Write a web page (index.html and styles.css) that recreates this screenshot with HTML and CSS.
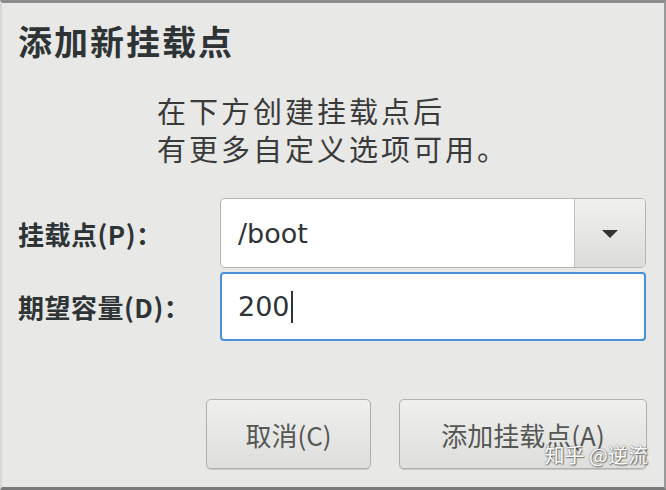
FILE: index.html
```html
<!DOCTYPE html>
<html lang="zh">
<head>
<meta charset="utf-8">
<link rel="stylesheet" href="styles.css">
</head>
<body>
<div class="dialog">
  <div class="title">添加新挂载点</div>
  <div class="desc">在下方创建挂载点后<br>有更多自定义选项可用。</div>
  <div class="form">
    <div class="label">挂载点(P)：</div>
    <div class="combo">
      <div class="combo-entry">/boot</div>
      <div class="combo-btn">
        <svg width="20" height="12" viewBox="0 0 20 12"><polygon points="2,3 18,3 10,11" fill="#333"/></svg>
      </div>
    </div>
    <div class="label">期望容量(D)：</div>
    <div class="entry">200<span class="cursor"></span></div>
  </div>
  <div class="buttons">
    <div class="btn cancel">取消(C)</div>
    <div class="btn add">添加挂载点(A)</div>
  </div>
  <div class="watermark">知乎 @逆流</div>
</div>
</body>
</html>
```
FILE: styles.css
```css
html, body {
  margin: 0;
  padding: 0;
  background: #e8e8e7;
}
.dialog {
  position: relative;
  box-sizing: border-box;
  width: 666px;
  height: 490px;
  background: #e8e8e7;
  border-top: 3px solid #8c8c8c;
  border-bottom: 3px solid #7a7a7a;
  border-left: 2px solid #d8d8d6;
  border-right: 2px solid #9a9a9a;
  margin-right: 4px;
  font-family: "DejaVu Sans", "Noto Sans CJK SC", sans-serif;
  color: #2e3436;
  padding: 0 0 0 16px;
  display: flex;
  flex-direction: column;
}
.title {
  font-family: "Noto Sans CJK SC", sans-serif;
  font-weight: bold;
  font-size: 34px;
  letter-spacing: 2px;
  line-height: 40px;
  margin-top: 18px;
  color: #2e3436;
}
.desc {
  font-family: "Noto Sans CJK SC", sans-serif;
  font-size: 29px;
  letter-spacing: 3px;
  line-height: 38px;
  margin-top: 30px;
  margin-left: 139px;
  color: #3a3a3a;
}
.form {
  display: grid;
  grid-template-columns: 202px 426px;
  grid-template-rows: 70px 69px;
  row-gap: 4px;
  align-items: center;
  margin-top: 31px;
}
.label {
  font-family: "Noto Sans CJK SC", sans-serif;
  font-weight: bold;
  font-size: 26px;
  letter-spacing: 0.5px;
  color: #2e3436;
}
.combo {
  display: flex;
  height: 70px;
  box-sizing: border-box;
  border: 1px solid #b4b4b1;
  border-radius: 5px;
  background: #fff;
  overflow: hidden;
}
.combo-entry {
  flex: 1;
  display: flex;
  align-items: center;
  padding-left: 17px;
  font-size: 27px;
  color: #2e3436;
}
.combo-btn {
  width: 70px;
  border-left: 1px solid #c0c0bd;
  background: linear-gradient(#f0f0ef, #dcdcda);
  display: flex;
  align-items: center;
  justify-content: center;
}
.entry {
  height: 69px;
  box-sizing: border-box;
  border: 2px solid #4a90d9;
  border-radius: 4px;
  background: #fff;
  display: flex;
  align-items: center;
  padding-left: 16px;
  font-size: 27px;
  color: #2e3436;
}
.cursor {
  display: inline-block;
  width: 2px;
  height: 32px;
  background: #2e3436;
  margin-left: 1px;
}
.buttons {
  display: flex;
  gap: 28px;
  margin-top: 58px;
  margin-left: 188px;
}
.btn {
  height: 70px;
  box-sizing: border-box;
  border: 1px solid #b0b0ad;
  border-radius: 5px;
  background: linear-gradient(#efefee, #dededc);
  box-shadow: 0 1px 1px rgba(0,0,0,0.15);
  display: flex;
  align-items: center;
  justify-content: center;
  font-family: "Noto Sans CJK SC", sans-serif;
  font-size: 26px;
  color: #555753;
}
.cancel { width: 165px; }
.add { width: 248px; }
.watermark {
  position: absolute;
  right: 16px;
  bottom: 18px;
  font-family: "Noto Sans CJK SC", sans-serif;
  font-size: 20px;
  color: #fff;
  text-shadow: 0 0 2px rgba(0,0,0,0.6), 1px 1px 1px rgba(0,0,0,0.4);
}
```
